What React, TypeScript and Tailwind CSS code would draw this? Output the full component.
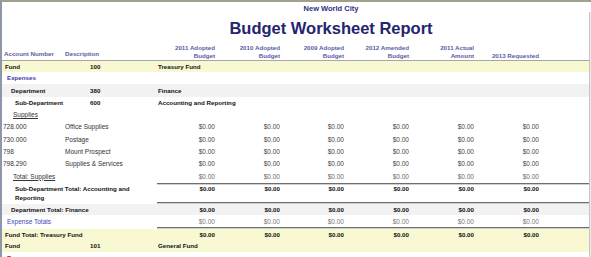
import React from 'react';

// right edges of the six amount columns land at 215, 280, 344, 409, 474, 539
const colWidths = ['w-[58px]', 'w-[65px]', 'w-[64px]', 'w-[65px]', 'w-[65px]', 'w-[65px]'];

const headers: [string, string][] = [
    ['2011 Adopted', 'Budget'],
    ['2010 Adopted', 'Budget'],
    ['2009 Adopted', 'Budget'],
    ['2012 Amended', 'Budget'],
    ['2011 Actual', 'Amount'],
    ['', '2013 Requested'],
];

const lineItems = [
    { acct: '728.000', desc: 'Office Supplies', h: 'h-[12px]' },
    { acct: '730.000', desc: 'Postage', h: 'h-[13px]' },
    { acct: '798', desc: 'Mount Prospect', h: 'h-[12px]' },
    { acct: '798.290', desc: 'Supplies & Services', h: 'h-[12px]' },
];

function Amounts({ className = '' }: { className?: string }) {
    return (
        <div className={`flex ${className}`}>
            {colWidths.map((w, i) => (
                <div key={i} className={`${w} text-right`}>$0.00</div>
            ))}
        </div>
    );
}

function Rule() {
    return <div className="ml-[155px] h-[2px] border-t border-[#6e6e6e] bg-[#cfcfcf]" />;
}

export default function App() {
    return (
        <div className="flex h-[257px] w-[591px] overflow-hidden border-t-2 border-l-2 border-t-[#a39f8e] border-l-[#8d97a9] bg-white font-['Liberation_Sans',Arial,sans-serif] text-[6.5px] text-[#333]">
            <div className="w-[587px] shrink-0">
                {/* report title */}
                <div className="w-[658px]">
                    <div className="h-[13px] text-center text-[7.5px] font-bold leading-[13px] text-[#2e2e80]">
                        New World City
                    </div>
                    <div className="h-[26px] text-center text-[16.5px] font-bold leading-[26px] text-[#24246e]">
                        Budget Worksheet Report
                    </div>
                </div>

                {/* column headings */}
                <div className="flex h-[19px] items-end text-[6.2px] font-bold leading-[8px] text-[#5b5ba6]">
                    <div className="w-[63px] pb-[2px] pl-[2px]">Account Number</div>
                    <div className="w-[92px] pb-[2px]">Description</div>
                    {headers.map(([a, b], i) => (
                        <div key={i} className={`${colWidths[i]} text-right`}>
                            {a && <div>{a}</div>}
                            <div>{b}</div>
                        </div>
                    ))}
                </div>
                <div className="h-px bg-[#a6a6a6]" />

                {/* fund heading */}
                <div className="flex h-[11px] items-center bg-[#f8f8d3] text-[6.2px] font-bold text-[#111]">
                    <div className="w-[88px] pl-[3px]">Fund</div>
                    <div className="w-[68px]">100</div>
                    <div>Treasury Fund</div>
                </div>
                <div className="flex h-[12px] items-center pl-[5px] text-[6.2px] font-bold text-[#3c3ca8]">
                    Expenses
                </div>
                <div className="flex h-[13px] items-center bg-[#f2f2f2] text-[6.2px] font-bold text-[#111]">
                    <div className="w-[88px] pl-[9px]">Department</div>
                    <div className="w-[68px]">380</div>
                    <div>Finance</div>
                </div>
                <div className="flex h-[12px] items-center text-[6.2px] font-bold text-[#111]">
                    <div className="w-[88px] pl-[13px]">Sub-Department</div>
                    <div className="w-[68px]">600</div>
                    <div>Accounting and Reporting</div>
                </div>
                <div className="flex h-[12px] items-center pl-[11px]">
                    <span className="underline">Supplies</span>
                </div>

                {/* line items */}
                {lineItems.map((r) => (
                    <div key={r.acct} className={`flex ${r.h} items-center`}>
                        <div className="w-[63px] pl-[1px]">{r.acct}</div>
                        <div className="w-[92px]">{r.desc}</div>
                        <Amounts className="text-[#444]" />
                    </div>
                ))}
                <div className="flex h-[13px] items-center">
                    <div className="w-[155px] pl-[11px]">
                        <span className="underline">Total: Supplies</span>
                    </div>
                    <Amounts className="text-[#666]" />
                </div>
                <Rule />

                {/* totals */}
                <div className="flex h-[17px] text-[6.2px] font-bold leading-[8.5px] text-[#111]">
                    <div className="w-[155px] pl-[13px]">
                        Sub-Department Total: Accounting and
                        <br />
                        Reporting
                    </div>
                    <Amounts />
                </div>
                <Rule />
                <div className="flex h-[11px] items-center bg-[#f2f2f2] text-[6.2px] font-bold text-[#111]">
                    <div className="w-[155px] pl-[9px]">Department Total: Finance</div>
                    <Amounts />
                </div>
                <div className="flex h-[12px] items-center pt-[1px]">
                    <div className="w-[155px] pl-[5px] text-[#4545b5]">Expense Totals</div>
                    <Amounts className="text-[#777]" />
                </div>
                <Rule />
                <div className="bg-[#f8f8d3] text-[6.2px] font-bold text-[#111]">
                    <div className="flex h-[11px] items-center">
                        <div className="w-[155px] pl-[3px]">Fund Total: Treasury Fund</div>
                        <Amounts />
                    </div>
                    <div className="flex h-[12px] items-center">
                        <div className="w-[88px] pl-[3px]">Fund</div>
                        <div className="w-[68px]">101</div>
                        <div>General Fund</div>
                    </div>
                </div>
                <div className="flex h-[12px] items-center pl-[5px] text-[6.2px] font-bold text-[#c41a1a]">
                    Revenues
                </div>
            </div>

            {/* scroll bar sliver */}
            <div className="w-[2px] shrink-0 pt-[10px]">
                <div className="h-full border-l border-[#c4c4c4] bg-[#ececec]" />
            </div>
        </div>
    );
}
